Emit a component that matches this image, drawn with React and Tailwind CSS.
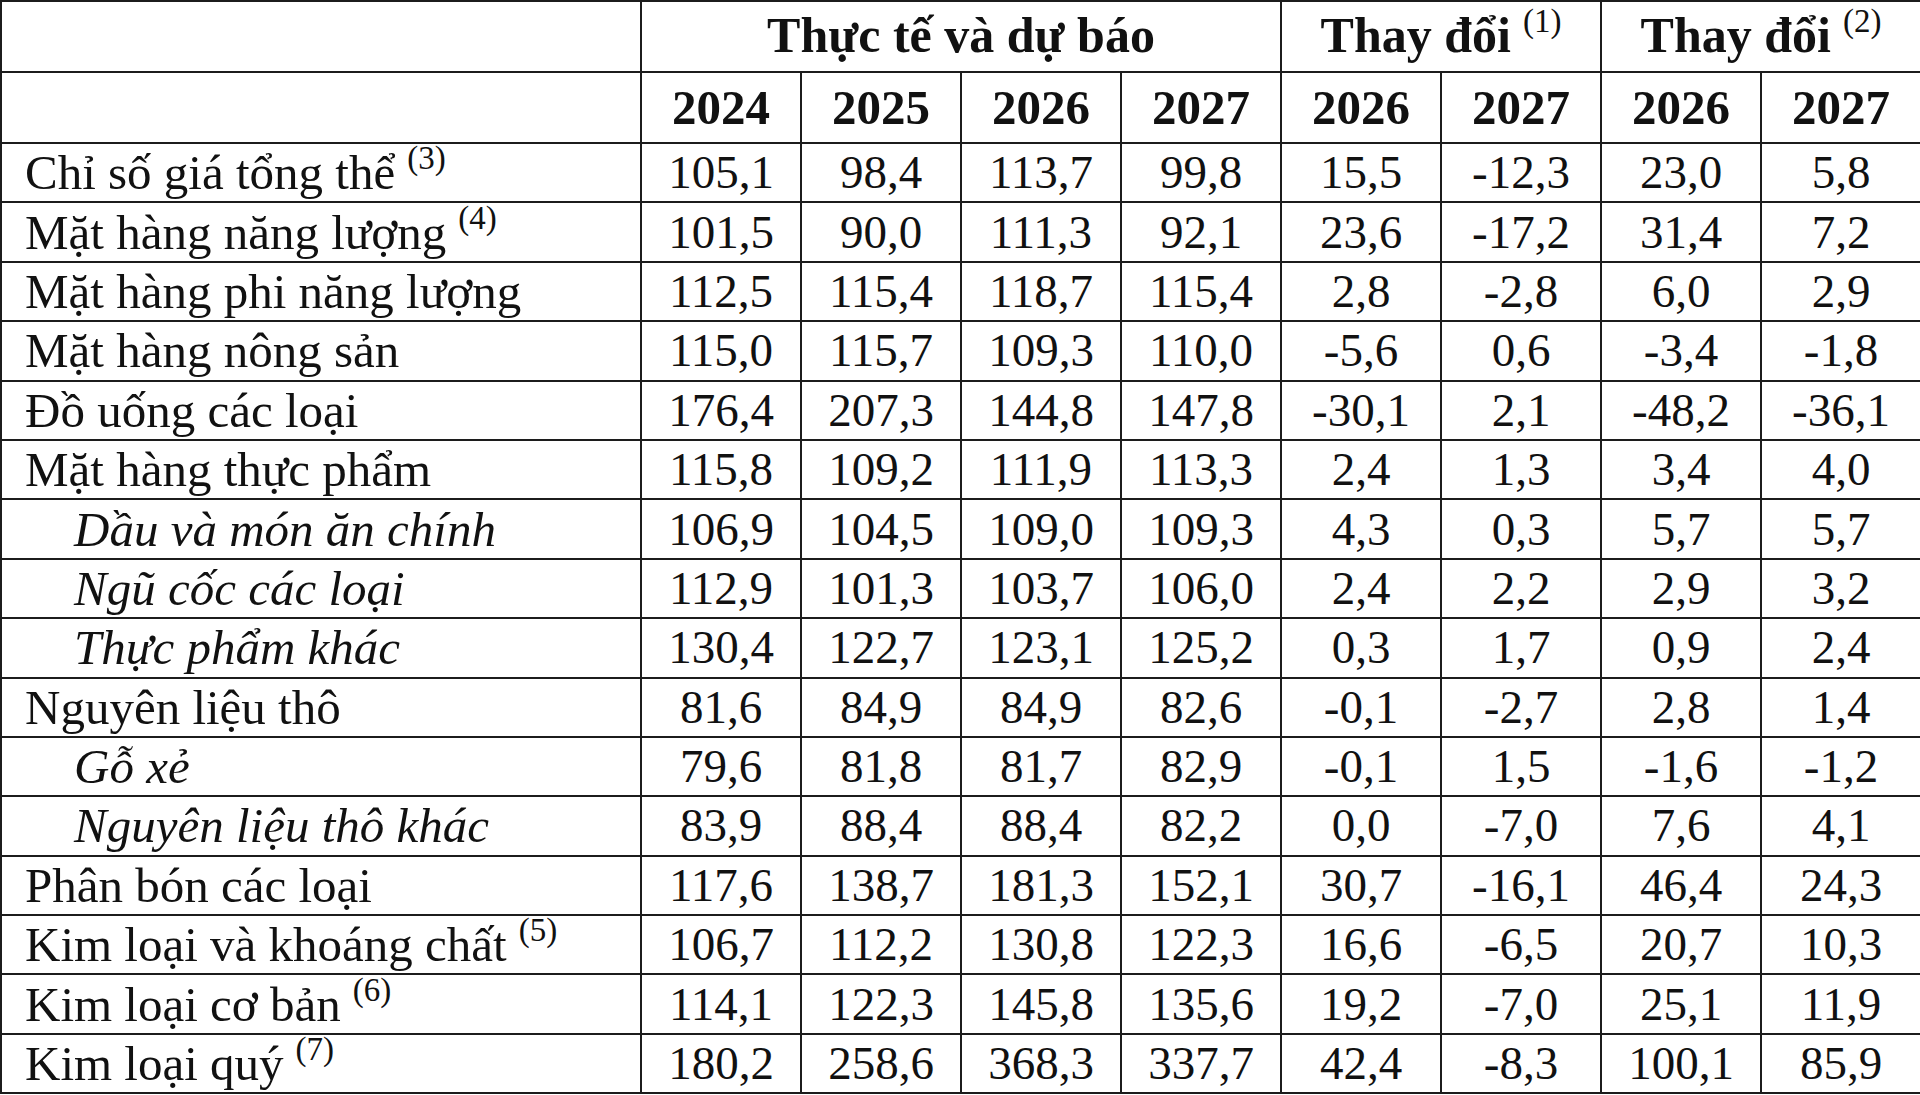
import React from "react";

const rows = [
  { label: "Chỉ số giá tổng thể", sup: "(3)", v: ["105,1", "98,4", "113,7", "99,8", "15,5", "-12,3", "23,0", "5,8"] },
  { label: "Mặt hàng năng lượng", sup: "(4)", v: ["101,5", "90,0", "111,3", "92,1", "23,6", "-17,2", "31,4", "7,2"] },
  { label: "Mặt hàng phi năng lượng", v: ["112,5", "115,4", "118,7", "115,4", "2,8", "-2,8", "6,0", "2,9"] },
  { label: "Mặt hàng nông sản", v: ["115,0", "115,7", "109,3", "110,0", "-5,6", "0,6", "-3,4", "-1,8"] },
  { label: "Đồ uống các loại", v: ["176,4", "207,3", "144,8", "147,8", "-30,1", "2,1", "-48,2", "-36,1"] },
  { label: "Mặt hàng thực phẩm", v: ["115,8", "109,2", "111,9", "113,3", "2,4", "1,3", "3,4", "4,0"] },
  { label: "Dầu và món ăn chính", sub: true, v: ["106,9", "104,5", "109,0", "109,3", "4,3", "0,3", "5,7", "5,7"] },
  { label: "Ngũ cốc các loại", sub: true, v: ["112,9", "101,3", "103,7", "106,0", "2,4", "2,2", "2,9", "3,2"] },
  { label: "Thực phẩm khác", sub: true, v: ["130,4", "122,7", "123,1", "125,2", "0,3", "1,7", "0,9", "2,4"] },
  { label: "Nguyên liệu thô", v: ["81,6", "84,9", "84,9", "82,6", "-0,1", "-2,7", "2,8", "1,4"] },
  { label: "Gỗ xẻ", sub: true, v: ["79,6", "81,8", "81,7", "82,9", "-0,1", "1,5", "-1,6", "-1,2"] },
  { label: "Nguyên liệu thô khác", sub: true, v: ["83,9", "88,4", "88,4", "82,2", "0,0", "-7,0", "7,6", "4,1"] },
  { label: "Phân bón các loại", v: ["117,6", "138,7", "181,3", "152,1", "30,7", "-16,1", "46,4", "24,3"] },
  { label: "Kim loại và khoáng chất", sup: "(5)", v: ["106,7", "112,2", "130,8", "122,3", "16,6", "-6,5", "20,7", "10,3"] },
  { label: "Kim loại cơ bản", sup: "(6)", v: ["114,1", "122,3", "145,8", "135,6", "19,2", "-7,0", "25,1", "11,9"] },
  { label: "Kim loại quý", sup: "(7)", v: ["180,2", "258,6", "368,3", "337,7", "42,4", "-8,3", "100,1", "85,9"] },
];

const years = ["2024", "2025", "2026", "2027", "2026", "2027", "2026", "2027"];

const Sup = ({ children }) => (
  <sup className="text-[33px] font-normal top-[-0.6em] ml-[12px]">{children}</sup>
);

const App = () => {
  return (
    <div className="w-[1920px] h-[1095px] bg-white text-[#111] font-['Liberation_Serif','Times_New_Roman',serif] overflow-hidden">
      <table className="w-[1920px] table-fixed border-collapse border-2 border-[#1c1c1c] text-[47px] leading-none">
        <colgroup>
          <col className="w-[640px]" />
          {years.map((_, i) => (
            <col key={i} className="w-[160px]" />
          ))}
        </colgroup>
        <thead>
          <tr className="h-[71px]">
            <th className="border-2 border-[#1c1c1c]" />
            <th colSpan={4} className="border-2 border-[#1c1c1c] font-bold text-center text-[50px] pb-[4px]">
              Thực tế và dự báo
            </th>
            <th colSpan={2} className="border-2 border-[#1c1c1c] font-bold text-center text-[50px] pb-[4px]">
              Thay đổi<Sup>(1)</Sup>
            </th>
            <th colSpan={2} className="border-2 border-[#1c1c1c] font-bold text-center text-[50px] pb-[4px]">
              Thay đổi<Sup>(2)</Sup>
            </th>
          </tr>
          <tr className="h-[71px]">
            <th className="border-2 border-[#1c1c1c]" />
            {years.map((y, i) => (
              <th key={i} className="border-2 border-[#1c1c1c] font-bold text-center text-[49px]">
                {y}
              </th>
            ))}
          </tr>
        </thead>
        <tbody>
          {rows.map((r, i) => (
            <tr key={i} className="h-[59.4px]">
              <td
                className={
                  r.sub
                    ? "border-2 border-[#1c1c1c] text-left pl-[72px] italic whitespace-nowrap text-[49px]"
                    : "border-2 border-[#1c1c1c] text-left pl-[23px] whitespace-nowrap text-[49px]"
                }
              >
                {r.label}
                {r.sup && <Sup>{r.sup}</Sup>}
              </td>
              {r.v.map((v, j) => (
                <td key={j} className="border-2 border-[#1c1c1c] text-center">
                  {v}
                </td>
              ))}
            </tr>
          ))}
        </tbody>
      </table>
    </div>
  );
};

export default App;
